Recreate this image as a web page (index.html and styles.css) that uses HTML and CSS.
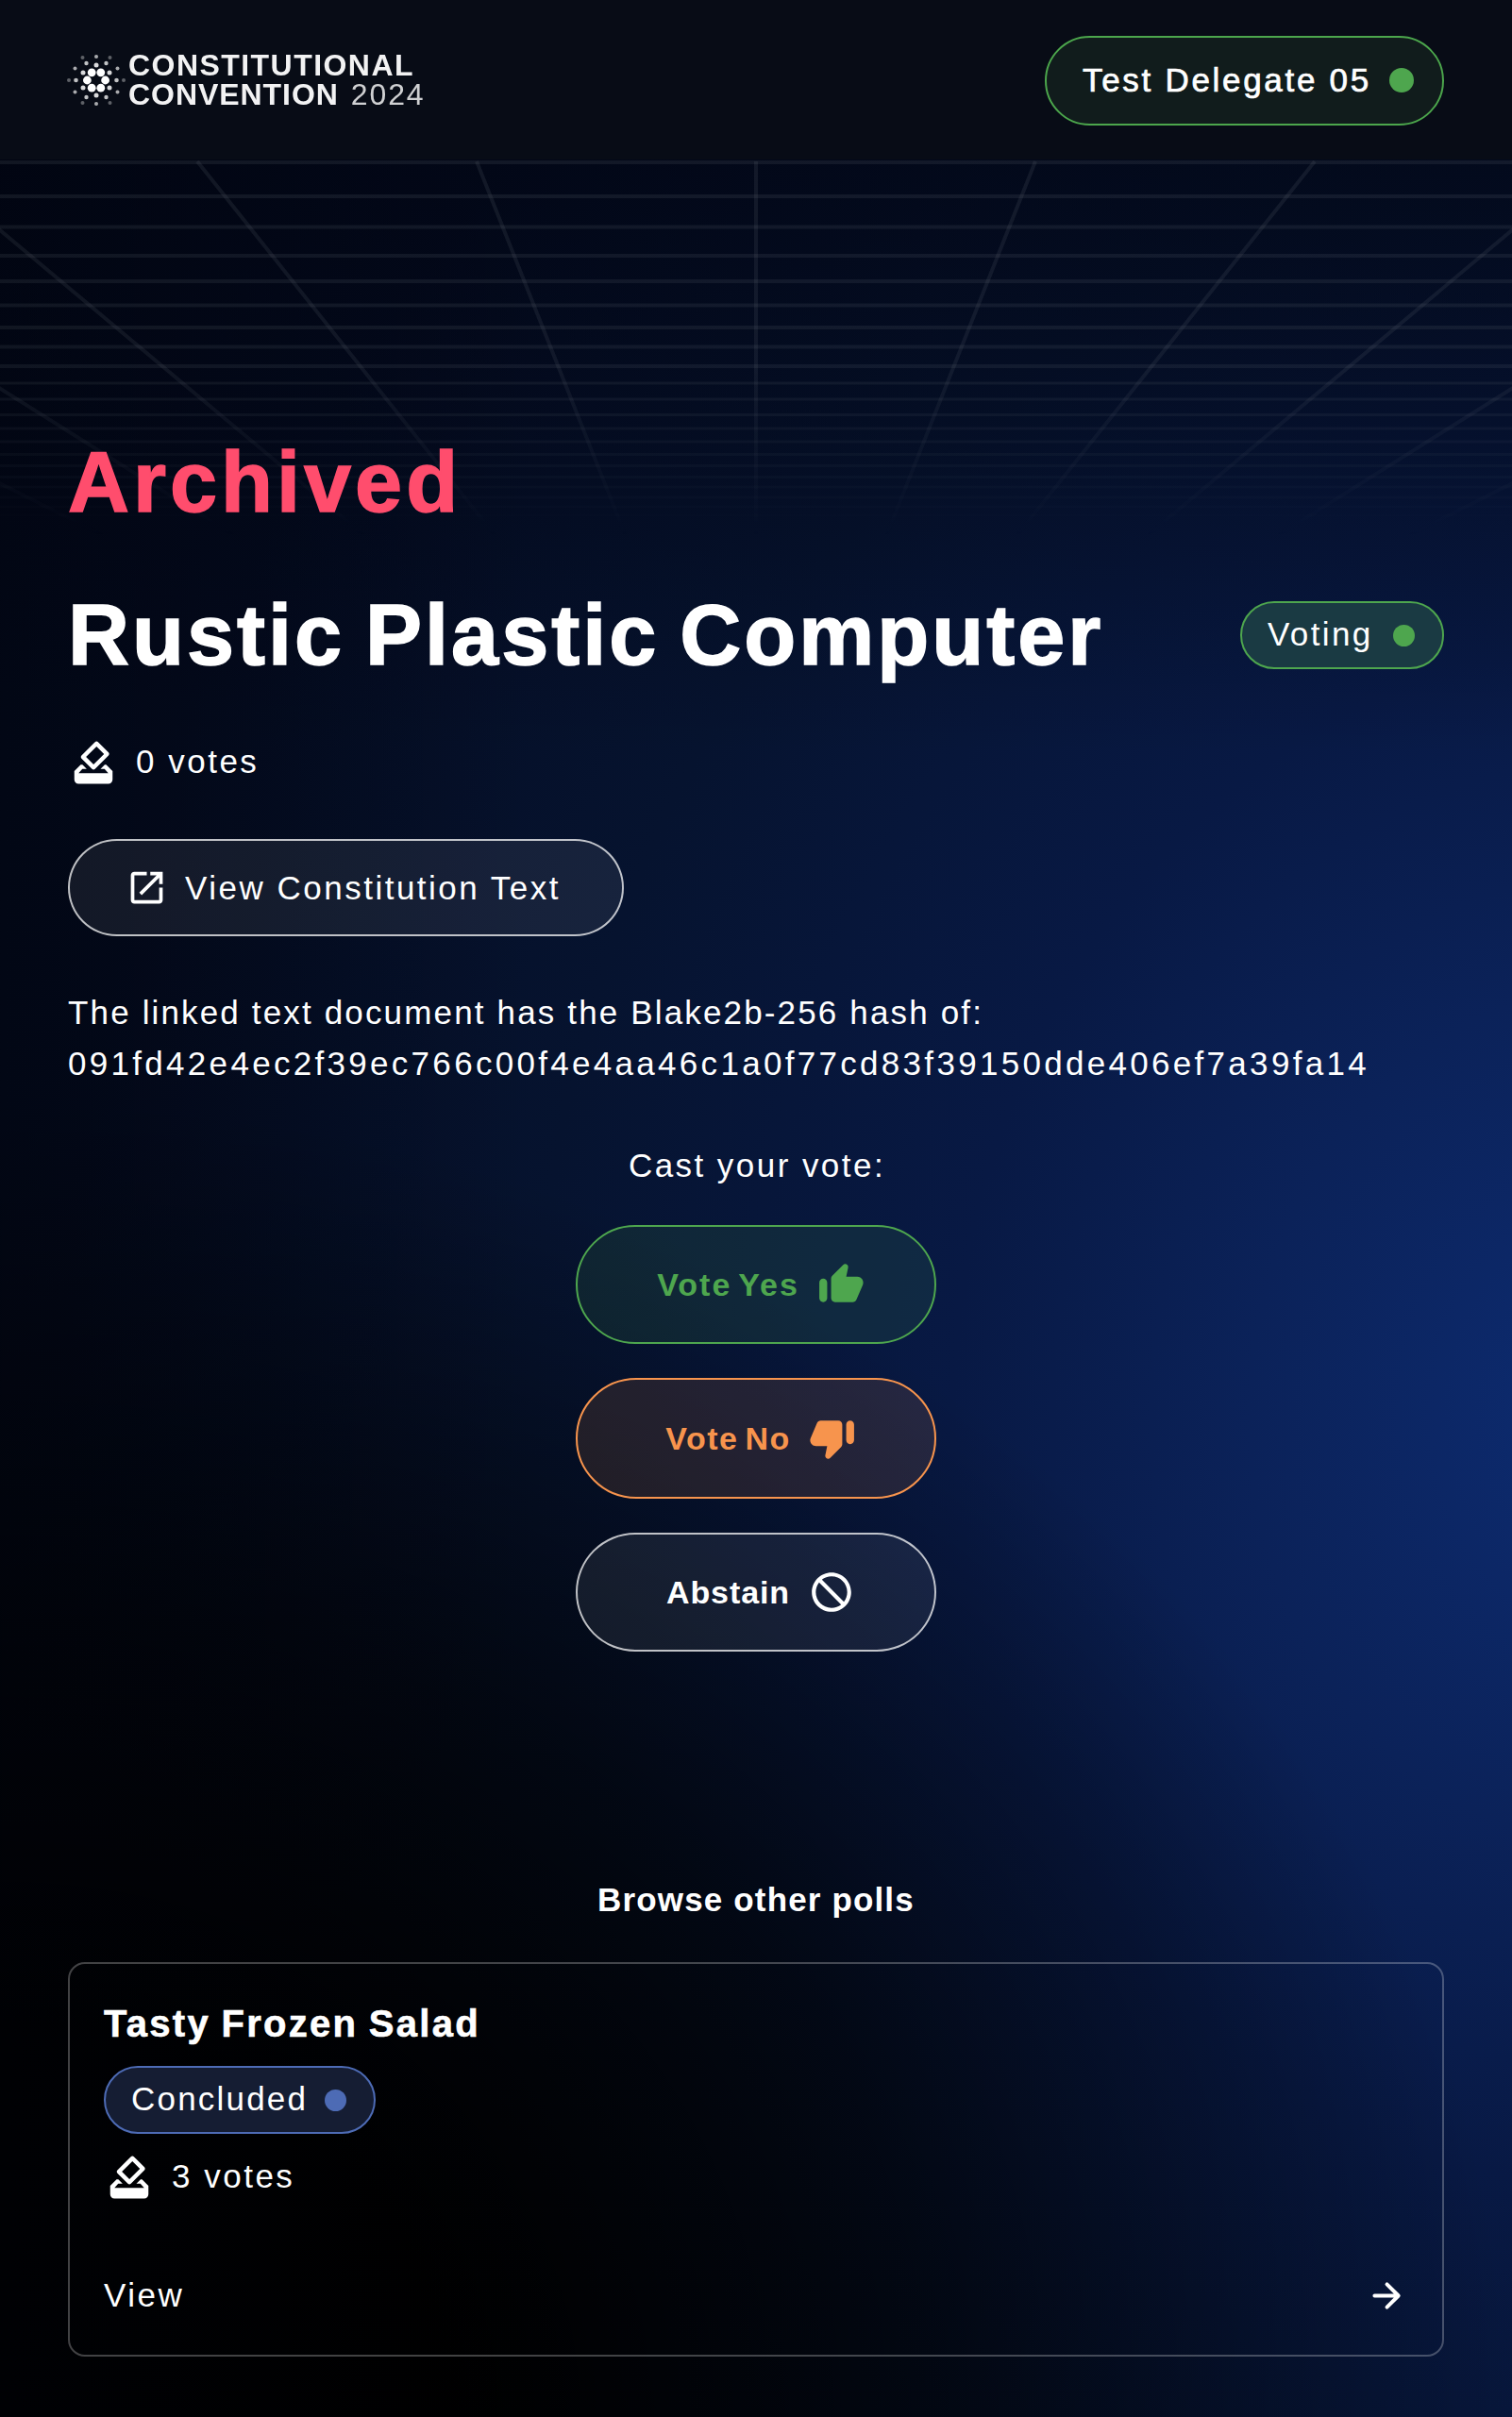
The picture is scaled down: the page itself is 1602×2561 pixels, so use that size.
FILE: index.html
```html
<!DOCTYPE html>
<html lang="en">
<head>
<meta charset="utf-8">
<title>Constitutional Convention 2024</title>
<link rel="stylesheet" href="styles.css">
</head>
<body>
<div class="page">
  <svg class="grid" viewBox="0 0 1602 400" aria-hidden="true">
    <defs>
      <linearGradient id="fade" x1="0" y1="0" x2="0" y2="400" gradientUnits="userSpaceOnUse">
        <stop offset="0" stop-color="#fff"/><stop offset=".55" stop-color="#fff" stop-opacity=".9"/><stop offset="1" stop-color="#fff" stop-opacity="0"/>
      </linearGradient>
      <mask id="m" maskUnits="userSpaceOnUse" x="0" y="0" width="1602" height="400"><rect width="1602" height="400" fill="url(#fade)"/></mask>
    </defs>
    <g mask="url(#m)" fill="none" stroke="#868a94" stroke-opacity=".13">
      <path stroke-width="4" d="M0 3H1602M0 39H1602M0 71.500H1602M0 102H1602M0 129H1602M0 154.500H1602M0 178H1602M0 198.500H1602M0 219H1602"/>
      <path stroke-width="3" d="M0 237H1602M0 254H1602M0 270.500H1602M0 285H1602M0 299H1602M0 312.500H1602M0 324.500H1602M0 336.500H1602M0 347H1602M0 358H1602M0 368H1602M0 377H1602"/>
      <path stroke-width="4" d="M801 2V400M1097 2L801 746M505 2L801 746M1393 2L801 746M209 2L801 746M1689 2L801 746M-87 2L801 746M1985 2L801 746M-383 2L801 746M2281 2L801 746M-679 2L801 746"/>
    </g>
  </svg>
  <header class="header">
    <div class="logo">
      <svg class="logo-mark" viewBox="-31 -31 62 62" fill="#fff" aria-hidden="true">
        <g><circle cx="4.800" cy="-8.200" r="4.400"/><circle cx="-4.800" cy="-8.200" r="4.400"/><circle cx="9.600" cy="0" r="4.400"/><circle cx="-9.600" cy="0" r="4.400"/><circle cx="4.800" cy="8.200" r="4.400"/><circle cx="-4.800" cy="8.200" r="4.400"/></g>
        <g opacity=".85"><circle cx="0" cy="-16" r="2.500"/><circle cx="0" cy="16" r="2.500"/><circle cx="14" cy="-8" r="2.500"/><circle cx="-14" cy="-8" r="2.500"/><circle cx="14" cy="8" r="2.500"/><circle cx="-14" cy="8" r="2.500"/></g>
        <g opacity=".75"><circle cx="10.500" cy="-18" r="2.200"/><circle cx="-10.500" cy="-18" r="2.200"/><circle cx="10.500" cy="18" r="2.200"/><circle cx="-10.500" cy="18" r="2.200"/><circle cx="21.500" cy="0" r="2.300"/><circle cx="-21.500" cy="0" r="2.300"/></g>
        <g opacity=".65"><circle cx="0" cy="-25" r="2"/><circle cx="0" cy="25" r="2"/><circle cx="22.500" cy="-12.500" r="2"/><circle cx="-22.500" cy="-12.500" r="2"/><circle cx="22.500" cy="12.500" r="2"/><circle cx="-22.500" cy="12.500" r="2"/></g>
        <g opacity=".35"><circle cx="14.500" cy="-24" r="2"/><circle cx="-14.500" cy="-24" r="2"/><circle cx="14.500" cy="24" r="2"/><circle cx="-14.500" cy="24" r="2"/><circle cx="29" cy="0" r="2"/><circle cx="-29" cy="0" r="2"/></g>
      </svg>
      <div class="logo-text"><div><span class="t-l1">CONSTITUTIONAL</span></div><div><span class="t-l2">CONVENTION</span> <span class="year">2024</span></div></div>
    </div>
    <div class="user"><span class="t-user">Test Delegate 05</span><i class="dot"></i></div>
  </header>
  <main class="main">
    <h1 class="archived"><span class="t-arch">Archived</span></h1>
    <div class="title-row">
      <h1 class="title"><span class="t-title">Rustic Plastic Computer</span></h1>
      <div class="chip chip-green"><span class="t-voting">Voting</span><i class="dot"></i></div>
    </div>
    <div class="votes">
      <svg class="icon-vote" viewBox="0 0 24 24" aria-hidden="true"><use href="#vote"/></svg><span class="t-v0">0 votes</span>
    </div>
    <a class="link-btn"><svg viewBox="0 0 24 24" aria-hidden="true"><path d="M19 19H5V5h7V3H5c-1.110 0-2 .9-2 2v14c0 1.100.89 2 2 2h14c1.100 0 2-.9 2-2v-7h-2zM14 3v2h3.590l-9.830 9.830 1.410 1.410L19 6.410V10h2V3z"/></svg><span class="t-link">View Constitution Text</span></a>
    <p class="hash"><span class="t-h1">The linked text document has the Blake2b-256 hash of:</span><br><span class="t-h2">091fd42e4ec2f39ec766c00f4e4aa46c1a0f77cd83f39150dde406ef7a39fa14</span></p>
    <p class="cast"><span class="t-cast">Cast your vote:</span></p>
    <div class="actions">
      <button class="btn yes"><span class="t-yes">Vote Yes</span><svg viewBox="0 0 24 24" aria-hidden="true"><path d="M13.120 2.060 7.580 7.600c-.37.370-.58.880-.58 1.410V19c0 1.100.9 2 2 2h9c.8 0 1.520-.48 1.840-1.210l3.260-7.610C23.940 10.200 22.490 8 20.340 8h-5.650l.95-4.580c.1-.5-.05-1.010-.41-1.370-.59-.58-1.530-.58-2.110.010M3 21c1.100 0 2-.9 2-2v-8c0-1.100-.9-2-2-2s-2 .9-2 2v8c0 1.100.9 2 2 2"/></svg></button>
      <button class="btn no"><span class="t-no">Vote No</span><svg viewBox="0 0 24 24" aria-hidden="true"><path d="m10.880 21.940 5.530-5.540c.37-.37.580-.88.580-1.410V5c0-1.100-.9-2-2-2H6c-.8 0-1.520.48-1.830 1.210L.910 11.820C.060 13.800 1.510 16 3.660 16h5.650l-.95 4.580c-.1.500.05 1.010.41 1.370.590.580 1.530.580 2.110-.010M21 3c-1.100 0-2 .9-2 2v8c0 1.100.9 2 2 2s2-.9 2-2V5c0-1.100-.9-2-2-2"/></svg></button>
      <button class="btn abstain"><span class="t-abs">Abstain</span><svg viewBox="0 0 24 24" aria-hidden="true"><path d="M12 2C6.480 2 2 6.480 2 12s4.480 10 10 10 10-4.480 10-10S17.520 2 12 2M4 12c0-4.420 3.580-8 8-8 1.850 0 3.550.63 4.900 1.690L5.690 16.900C4.630 15.550 4 13.850 4 12m8 8c-1.850 0-3.550-.63-4.900-1.690L18.310 7.100C19.370 8.450 20 10.150 20 12c0 4.420-3.580 8-8 8" transform="matrix(-1 0 0 1 24 0)"/></svg></button>
    </div>
    <h2 class="browse"><span class="t-browse">Browse other polls</span></h2>
    <article class="card">
      <h3 class="card-title"><span class="t-card">Tasty Frozen Salad</span></h3>
      <div class="chip chip-blue"><span class="t-conc">Concluded</span><i class="dot"></i></div>
      <div class="votes card-votes">
        <svg class="icon-vote" viewBox="0 0 24 24" aria-hidden="true"><use href="#vote"/></svg><span class="t-v3">3 votes</span>
      </div>
      <div class="card-foot"><span class="t-view">View</span><svg viewBox="0 0 24 24" aria-hidden="true"><path d="M5 12H18M12 5.500 18.500 12 12 18.500" fill="none" stroke="currentColor" stroke-width="2.100" stroke-linecap="round" stroke-linejoin="round"/></svg></div>
    </article>
  </main>
</div>
<svg class="defs" width="0" height="0" aria-hidden="true"><defs>
  <path id="vote" d="M18 13h-.68l-2 2h1.910L19 17H5l1.780-2h2.050l-2-2H6l-3 3v4c0 1.100.89 2 1.990 2H19c1.100 0 2-.89 2-2v-4zm-1-5.050-4.950 4.950-3.540-3.540 4.950-4.950zm-4.240-5.660L6.390 8.660c-.39.390-.39 1.020 0 1.410l4.950 4.950c.39.390 1.020.39 1.410 0l6.360-6.360c.39-.39.39-1.020 0-1.410L14.160 2.300c-.38-.4-1.010-.4-1.400-.010"/>
</defs></svg>
</body>
</html>
```
FILE: styles.css
```css
* { box-sizing: border-box; }
html { background: #000; }
body { margin: 0; color: #fff; font-family: "Liberation Sans", Arial, sans-serif; font-size: 35px; line-height: 54px; }
h1, h2, h3, p { margin: 0; }
span { white-space: nowrap; }
svg { display: block; fill: currentColor; flex: none; }
.defs { position: absolute; }
.page {
  position: relative; width: 1602px; height: 2561px; overflow: hidden;
  background:
    linear-gradient(180deg, rgba(1,4,16,.66) 100px, rgba(1,4,16,0) 800px),
    linear-gradient(90deg, rgba(0,2,8,.5) 0, rgba(0,2,8,0) 560px),
    radial-gradient(ellipse 1600px 1400px at 0 2561px, #000 30%, rgba(0,0,0,.62) 62%, transparent 100%),
    radial-gradient(ellipse 1650px 1900px at 1720px 1500px, #0d2c72 0, #0b2259 24%, #081944 43%, #06132f 70%, #040c22 100%);
}
.grid { position: absolute; left: 0; top: 169px; width: 1602px; height: 400px; }
.header { position: relative; height: 169px; padding: 1px 72px 0; display: flex; justify-content: space-between; align-items: center; background: #080c16; }
.logo { display: flex; align-items: center; height: 62px; }
.logo-mark { width: 62px; height: 62px; margin: 0 3px 0 -1px; }
.logo-text { font-size: 32px; line-height: 31px; font-weight: 700; height: 62px; opacity: .95; }
.year { font-weight: 400; opacity: .85; margin-left: 4px; letter-spacing: 1.9px; }
.user { width: 423px; height: 95px; border: 2px solid #4ca64c; border-radius: 48px; background: #111c1c; display: flex; align-items: center; justify-content: space-between; padding: 0 30px 0 38px; }
.dot { width: 26px; height: 26px; border-radius: 50%; background: #4ea64e; flex: none; }
.main { position: relative; padding: 288px 72px 0; }
.archived, .title { font-size: 90px; line-height: 108px; font-weight: 700; -webkit-text-stroke: 1.5px currentColor; }
.archived { color: #ff4d6d; }
.title-row { display: flex; align-items: center; justify-content: space-between; margin-top: 54px; height: 108px; }
.chip { height: 72px; border: 2px solid; border-radius: 36px; display: flex; align-items: center; justify-content: space-between; padding: 0 29px 0 27px; }
.chip .dot { width: 23px; height: 23px; background: currentColor; }
.chip span { color: #fff; position: relative; top: -1px; }
.chip-green { width: 216px; color: #4ea64e; background: #1a3a43; }
.chip-blue { width: 288px; color: #4d6bb5; background: #151d33; }
.votes { display: flex; align-items: center; height: 54px; margin-top: 53px; }
.icon-vote { width: 54px; height: 54px; margin: 2px 18px 0 0; }
.link-btn { display: flex; align-items: center; width: 589px; height: 103px; margin-top: 55px; padding-left: 59px; border: 2px solid rgba(255,255,255,.75); border-radius: 52px; background: rgba(255,255,255,.07); background-clip: padding-box; }
.link-btn svg { width: 45px; height: 45px; margin-right: 18px; }
.hash { margin-top: 54px; height: 108px; }
.cast { margin-top: 54px; text-align: center; }
.actions { display: flex; flex-direction: column; align-items: center; gap: 36px; margin-top: 36px; }
.btn { width: 382px; height: 126px; border: 2px solid; border-radius: 64px; padding: 0 0 0 10px; display: flex; align-items: center; justify-content: center; gap: 19px; font: 700 34px/54px "Liberation Sans", Arial, sans-serif; }
.btn svg { width: 50px; height: 50px; }
.yes { color: #4ea64e; background: rgba(78,166,78,.13); }
.no { color: #f7944d; background: rgba(247,148,77,.12); height: 128px; }
.abstain { color: #fff; border-color: rgba(255,255,255,.75); background: rgba(255,255,255,.07); background-clip: padding-box; }
.browse { margin-top: 236px; font-size: 35px; line-height: 54px; text-align: center; }
.card { margin-top: 39px; height: 418px; border: 2px solid rgba(255,255,255,.26); border-radius: 18px; padding: 33px 36px 0; }
.card-title { font-size: 40px; line-height: 60px; -webkit-text-stroke: .6px #fff; }
.card .chip { margin-top: 15px; }
.card-votes { margin-top: 18px; }
.card-foot { display: flex; align-items: center; justify-content: space-between; margin-top: 72px; height: 54px; }
.card-foot svg { width: 45px; height: 45px; }

/* tracking */
.t-l1 { letter-spacing: 1.45px; }
.t-l2 { letter-spacing: .95px; }
.t-user { letter-spacing: 2.7px; -webkit-text-stroke: .7px #fff; }
.t-arch { letter-spacing: 4px; }
.t-title { letter-spacing: 3px; word-spacing: -6px; }
.t-voting { letter-spacing: 2.4px; }
.t-v0, .t-v3, .t-link { letter-spacing: 2.5px; }
.t-h1 { letter-spacing: 2.15px; }
.t-h2 { letter-spacing: 3.3px; }
.t-cast { letter-spacing: 2.45px; margin-left: 2px; }
.t-yes { letter-spacing: 2px; word-spacing: -4px; }
.t-no { letter-spacing: 1.5px; word-spacing: -4px; }
.t-abs { letter-spacing: .9px; }
.t-browse { letter-spacing: 1.15px; }
.t-card { letter-spacing: 2.3px; word-spacing: -2px; }
.t-conc { letter-spacing: 2.2px; }
.t-view { letter-spacing: 2.5px; }
```
